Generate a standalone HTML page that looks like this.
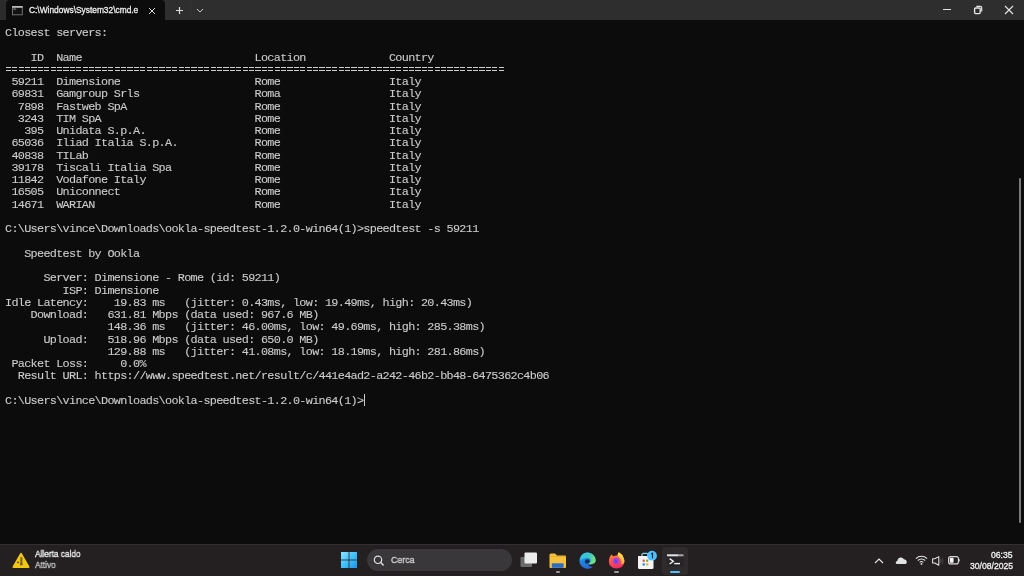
<!DOCTYPE html>
<html><head><meta charset="utf-8">
<style>
*{margin:0;padding:0;box-sizing:border-box}
html,body{width:1024px;height:576px;overflow:hidden;background:#0c0c0c}
#title{position:absolute;left:0;top:0;width:1024px;height:20.7px;background:#2e2e2e;border-bottom:1px solid #353535}
#lstrip{position:absolute;left:0;top:0;width:6px;height:20px;background:#2b2b2b}
#tab{position:absolute;left:6px;top:0px;width:159px;height:21px;background:#0c0c0c;border-radius:4px 4px 0 0}
#ticon{position:absolute;left:5.5px;top:6px}
#ttext{position:absolute;left:23px;top:4px;width:116px;-webkit-text-stroke:0.3px #f0f0f0;will-change:transform;overflow:hidden;font-family:"Liberation Sans",sans-serif;font-size:9.3px;color:#f0f0f0;white-space:nowrap;line-height:12px;}
#ttext span{display:inline-block;transform:scaleX(0.9);transform-origin:0 0}
#tclose{position:absolute;left:142px;top:7px}
#tplus{position:absolute;left:175px;top:6px}
#tsep{position:absolute;left:190px;top:2px;width:1px;height:15px;background:#333333}
#tdown{position:absolute;left:196px;top:8px}
#wmin{position:absolute;left:943px;top:9px;width:8px;height:1px;background:#e0e0e0}
#wres{position:absolute;left:972.5px;top:5px}
#wclose{position:absolute;left:1004px;top:5px}
#term{position:absolute;left:0;top:20px;width:1024px;height:524px;background:#0c0c0c}
.ln{position:absolute;left:5px;white-space:pre;font-family:"Liberation Mono",monospace;font-size:11.8px;letter-spacing:-0.68px;color:#cccccc;-webkit-text-stroke:0.1px #cccccc;will-change:transform;line-height:12px;height:12px}
#cursor{position:absolute;left:363.5px;top:394px;width:1px;height:12px;background:#cccccc}
.eq{position:absolute;left:5px;width:499.2px;height:1.4px;background:repeating-linear-gradient(to right,transparent 0 0.8px,#cfcfcf 0.8px 5.9px,transparent 5.9px 6.4px)}
#scroll{position:absolute;left:1019px;top:177.5px;width:2.4px;height:345.5px;background:#7a7a7a;border-radius:1.2px}
.tb{position:absolute;font-family:"Liberation Sans",sans-serif;font-size:9px;line-height:11px;white-space:nowrap;-webkit-text-stroke:0.3px currentColor;will-change:transform}
.sx{transform:scaleX(0.92);transform-origin:0 0}
#search{position:absolute;left:366.5px;top:4px;width:145px;height:22px;border-radius:11px;background:#393739}
.ind{position:absolute;top:26.5px;height:2px;border-radius:1px}
#active{position:absolute;left:662.2px;top:2.5px;width:26px;height:28px;border-radius:4px;background:#2f2b2d}
#taskbar{position:absolute;left:0;top:543.5px;width:1024px;height:32.5px;background:#242022;border-top:1px solid #343032}
</style></head><body>
<div id="title">
<div id="lstrip"></div>
<div id="tab">
<svg id="ticon" width="11" height="10" viewBox="0 0 11 10"><rect x="0.5" y="0.6" width="9.8" height="8.2" fill="#111" stroke="#7a7a7a" stroke-width="0.9"/><rect x="0.2" y="0.2" width="10.4" height="1.5" fill="#d0d0d0"/><rect x="1.2" y="2.2" width="3" height="2" fill="#555"/></svg>
<div id="ttext"><span>C:\Windows\System32\cmd.e</span></div>
<svg id="tclose" width="8" height="8" viewBox="0 0 8 8"><path d="M1 1L7 7M7 1L1 7" stroke="#d8d8d8" stroke-width="1"/></svg>
</div>
<svg id="tplus" width="9" height="9" viewBox="0 0 9 9"><path d="M4.5 1V8M1 4.5H8" stroke="#dcdcdc" stroke-width="1.2"/></svg>
<div id="tsep"></div>
<svg id="tdown" width="8" height="5" viewBox="0 0 8 5"><path d="M1 1L4 4L7 1" stroke="#cfcfcf" stroke-width="1" fill="none"/></svg>
<div id="wmin"></div>
<svg id="wres" width="10" height="10" viewBox="0 0 10 10"><rect x="1.6" y="3" width="5.6" height="5.6" rx="1" fill="none" stroke="#e4e4e4" stroke-width="1.4"/><path d="M3.3 1.4H7.4A1.3 1.3 0 0 1 8.7 2.7V6.6" fill="none" stroke="#e4e4e4" stroke-width="1.2"/></svg>
<svg id="wclose" width="10" height="10" viewBox="0 0 10 10"><path d="M1 1L9 9M9 1L1 9" stroke="#e6e6e6" stroke-width="1.1"/></svg>
</div>
<div id="term"></div>
<div id="lines">
<div class="ln" style="top:27.00px">Closest servers:</div>
<div class="ln" style="top:51.53px">    ID  Name                           Location             Country</div>
<div class="eq" style="top:66.80px"></div><div class="eq" style="top:69.80px"></div>
<div class="ln" style="top:76.07px"> 59211  Dimensione                     Rome                 Italy</div>
<div class="ln" style="top:88.33px"> 69831  Gamgroup Srls                  Roma                 Italy</div>
<div class="ln" style="top:100.60px">  7898  Fastweb SpA                    Rome                 Italy</div>
<div class="ln" style="top:112.87px">  3243  TIM SpA                        Rome                 Italy</div>
<div class="ln" style="top:125.13px">   395  Unidata S.p.A.                 Rome                 Italy</div>
<div class="ln" style="top:137.40px"> 65036  Iliad Italia S.p.A.            Rome                 Italy</div>
<div class="ln" style="top:149.67px"> 40838  TILab                          Rome                 Italy</div>
<div class="ln" style="top:161.93px"> 39178  Tiscali Italia Spa             Rome                 Italy</div>
<div class="ln" style="top:174.20px"> 11842  Vodafone Italy                 Rome                 Italy</div>
<div class="ln" style="top:186.47px"> 16505  Uniconnect                     Rome                 Italy</div>
<div class="ln" style="top:198.73px"> 14671  WARIAN                         Rome                 Italy</div>
<div class="ln" style="top:223.27px">C:\Users\vince\Downloads\ookla-speedtest-1.2.0-win64(1)&gt;speedtest -s 59211</div>
<div class="ln" style="top:247.80px">   Speedtest by Ookla</div>
<div class="ln" style="top:272.33px">      Server: Dimensione - Rome (id: 59211)</div>
<div class="ln" style="top:284.60px">         ISP: Dimensione</div>
<div class="ln" style="top:296.87px">Idle Latency:    19.83 ms   (jitter: 0.43ms, low: 19.49ms, high: 20.43ms)</div>
<div class="ln" style="top:309.13px">    Download:   631.81 Mbps (data used: 967.6 MB)</div>
<div class="ln" style="top:321.40px">                148.36 ms   (jitter: 46.00ms, low: 49.69ms, high: 285.38ms)</div>
<div class="ln" style="top:333.67px">      Upload:   518.96 Mbps (data used: 650.0 MB)</div>
<div class="ln" style="top:345.93px">                129.88 ms   (jitter: 41.08ms, low: 18.19ms, high: 281.86ms)</div>
<div class="ln" style="top:358.20px"> Packet Loss:     0.0%</div>
<div class="ln" style="top:370.47px">  Result URL: https://www.speedtest.net/result/c/441e4ad2-a242-46b2-bb48-6475362c4b06</div>
<div class="ln" style="top:395.00px">C:\Users\vince\Downloads\ookla-speedtest-1.2.0-win64(1)&gt;</div>
</div><!--e-->
<div id="scroll"></div>
<div id="cursor"></div>
<div id="taskbar">
<svg id="warn" width="18" height="17" viewBox="0 0 18 17" style="position:absolute;left:12px;top:7.7px">
<path d="M9 1.6 L16.6 15 L1.4 15 Z" fill="#f3c614" stroke="#f3c614" stroke-width="1.8" stroke-linejoin="round"/>
<rect x="8.3" y="5" width="2.1" height="6.2" rx="1" fill="#7a6412"/><circle cx="9.35" cy="12" r="1.6" fill="#7a6412"/><circle cx="6" cy="10.3" r="0.9" fill="#3a300a"/>
</svg>
<div class="tb sx" style="left:34.7px;top:4.3px;color:#f2f2f2">Allerta caldo</div>
<div class="tb sx" style="left:34.7px;top:15px;color:#c9c9c9">Attivo</div>
<svg width="17" height="17" viewBox="0 0 17 17" style="position:absolute;left:341px;top:7px">
<defs><linearGradient id="wg" gradientUnits="userSpaceOnUse" x1="0" y1="0" x2="16" y2="16"><stop offset="0" stop-color="#8ae6ff"/><stop offset="0.5" stop-color="#3fc0fa"/><stop offset="1" stop-color="#1b95ea"/></linearGradient></defs>
<rect x="0" y="0" width="7.6" height="7.6" fill="url(#wg)"/><rect x="8.4" y="0" width="7.6" height="7.6" fill="url(#wg)"/><rect x="0" y="8.4" width="7.6" height="7.6" fill="url(#wg)"/><rect x="8.4" y="8.4" width="7.6" height="7.6" fill="url(#wg)"/>
</svg>
<div id="search"></div>
<svg width="12" height="12" viewBox="0 0 12 12" style="position:absolute;left:373px;top:10.5px"><circle cx="5" cy="4.8" r="3.7" fill="none" stroke="#e0e0e0" stroke-width="1.2"/><path d="M7.7 7.5L10.2 10" stroke="#e0e0e0" stroke-width="1.4" stroke-linecap="round"/></svg>
<div class="tb sx" style="left:390.5px;top:9.8px;font-size:9.6px;color:#d6d6d6">Cerca</div>
<svg width="18" height="16" viewBox="0 0 18 16" style="position:absolute;left:520px;top:7px"><rect x="0.5" y="5" width="11.5" height="10" rx="1" fill="#6a6a6a"/><rect x="4.5" y="0.5" width="12.5" height="11" rx="1" fill="#ececec"/></svg>
<svg width="18" height="16" viewBox="0 0 18 16" style="position:absolute;left:549px;top:8px"><path d="M0.5 2 Q0.5 0.5 2 0.5 H6 L8 2.5 H16 Q17 2.5 17 3.5 V14 Q17 15 16 15 H1.5 Q0.5 15 0.5 14 Z" fill="#f6c23c"/><path d="M0.5 3.5 H17" stroke="#e0a820" stroke-width="0.8"/><rect x="2.8" y="10.3" width="11.8" height="4.5" fill="#2a6dc4"/></svg>
<div class="ind" style="left:556px;width:4px;background:#9a9a9a"></div>
<svg width="17" height="17" viewBox="0 0 17 17" style="position:absolute;left:579px;top:7.3px">
<defs><linearGradient id="eg" x1="0.2" y1="0" x2="0.5" y2="1"><stop offset="0" stop-color="#30b8f0"/><stop offset="0.55" stop-color="#1f7fe0"/><stop offset="1" stop-color="#2a6ad0"/></linearGradient><linearGradient id="eg2" x1="0" y1="0" x2="1" y2="0.5"><stop offset="0" stop-color="#2ec6ee"/><stop offset="0.55" stop-color="#3cc8c8"/><stop offset="1" stop-color="#74e27a"/></linearGradient></defs>
<path d="M16.6 9.6 A8.1 8.1 0 1 0 13.6 15 Q10 14.5 8.8 12.5 Q11.5 13 13.5 12.2 Q16.3 11.3 16.6 9.6Z" fill="url(#eg)"/>
<path d="M8.5 0.4 A8.1 8.1 0 0 1 16.6 9.2 Q16.3 11.5 13.2 12 Q10.5 12.4 9 11.8 Q12.2 10.5 11.8 8 Q11 5.5 7.5 5.8 Q4 6.2 1.0 8.2 Q2 0.6 8.5 0.4Z" fill="url(#eg2)"/>
<ellipse cx="8.3" cy="9.4" rx="2.4" ry="2.2" fill="#0b2d5c"/>
</svg>
<svg width="17" height="17" viewBox="0 0 17 17" style="position:absolute;left:608px;top:7.5px">
<defs><linearGradient id="fg" x1="0.3" y1="0" x2="0.5" y2="1"><stop offset="0" stop-color="#ff9a30"/><stop offset="0.45" stop-color="#ff5a45"/><stop offset="1" stop-color="#f0286a"/></linearGradient>
<linearGradient id="fy" x1="0" y1="0" x2="0.3" y2="1"><stop offset="0" stop-color="#ffe64a"/><stop offset="1" stop-color="#ffb43a"/></linearGradient>
<radialGradient id="fp" cx="0.5" cy="0.6" r="0.5"><stop offset="0" stop-color="#6a3ae8"/><stop offset="1" stop-color="#b04ad8"/></radialGradient></defs>
<path d="M3.2 2.5 Q4.6 3.8 5.6 4.3 Q7.5 3.2 9.5 3.6 Q9.8 1.5 10.8 0.3 Q14.6 2.2 15.9 6.5 Q16.6 8.5 16.2 10.5 Q15.2 16.4 8.4 16.5 Q1.6 16.2 0.8 9.8 Q0.6 6 3.2 2.5Z" fill="url(#fg)"/>
<path d="M10.8 0.3 Q14.6 2.2 15.9 6.5 Q16.6 8.5 16.2 10.5 Q15.3 12.5 13.3 12.3 Q14.2 9 12.2 6.6 Q10.2 4.3 9.5 3.6 Q9.8 1.5 10.8 0.3Z" fill="url(#fy)"/>
<ellipse cx="8.0" cy="8.8" rx="3.3" ry="3.4" fill="url(#fp)"/>
</svg>
<div class="ind" style="left:614px;width:4.5px;background:#9a9a9a"></div>
<svg width="22" height="24" viewBox="0 0 22 24" style="position:absolute;left:637px;top:2px">
<path d="M5 9 V7.5 Q5 6.3 6.5 6.3 H9.5 Q11 6.3 11 7.5 V9" fill="none" stroke="#7fd0e8" stroke-width="1.3"/>
<path d="M1 9 H16.5 V20.5 Q16.5 22 15 22 H2.5 Q1 22 1 20.5 Z" fill="#f4f4f6"/>
<rect x="5.6" y="12.6" width="2.2" height="2.2" fill="#e2553a"/><rect x="9.1" y="12.6" width="2.2" height="2.2" fill="#7aa82a"/><rect x="5.6" y="16.3" width="2.2" height="2.2" fill="#1a8ac8"/><rect x="9.1" y="16.3" width="2.2" height="2.2" fill="#e8b22a"/>
<circle cx="15" cy="8.7" r="4.9" fill="#4cc2ff"/><path d="M14.2 6.9 L15.5 6.2 V11.2" stroke="#0b2a3f" stroke-width="1.2" fill="none"/>
</svg>
<div id="active"></div>
<svg width="17" height="13" viewBox="0 0 17 13" style="position:absolute;left:666.5px;top:9.5px">
<rect x="0" y="0" width="16.5" height="12.5" rx="1" fill="#272527"/><rect x="0" y="0.3" width="11" height="2" fill="#e4e4e4"/><rect x="11" y="0.3" width="5.5" height="2" fill="#a8a8a8"/>
<path d="M2.6 4.6 L6.3 7.3 L2.6 10" stroke="#f2f2f2" stroke-width="1.4" fill="none"/><path d="M7.2 9.6 H13" stroke="#f2f2f2" stroke-width="1.4"/>
</svg>
<div class="ind" style="left:670px;width:10.3px;background:#4cc2ff"></div>
<svg width="10" height="6" viewBox="0 0 10 6" style="position:absolute;left:874px;top:13px"><path d="M1 5 L5 1 L9 5" fill="none" stroke="#e8e8e8" stroke-width="1.1"/></svg>
<svg width="13" height="9" viewBox="0 0 13 9" style="position:absolute;left:894.5px;top:11.2px"><path d="M2.2 8 Q0.6 8 0.7 6.4 Q0.8 5 2.3 4.9 Q2.8 1.6 5.8 1.4 Q8 1.3 8.9 3.3 Q11.6 3.2 11.8 5.8 Q12 8 10.2 8Z" fill="#e2e2e2"/></svg>
<svg width="13" height="10" viewBox="0 0 13 10" style="position:absolute;left:915.3px;top:10.6px"><path d="M0.9 3.6 A8 8 0 0 1 12.1 3.6" fill="none" stroke="#e6e6e6" stroke-width="1.05"/><path d="M2.8 5.5 A5.3 5.3 0 0 1 10.2 5.5" fill="none" stroke="#e6e6e6" stroke-width="1.05"/><path d="M4.7 7.3 A2.6 2.6 0 0 1 8.3 7.3" fill="none" stroke="#e6e6e6" stroke-width="1.05"/><circle cx="6.5" cy="8.9" r="0.95" fill="#e6e6e6"/></svg>
<svg width="13" height="10" viewBox="0 0 13 10" style="position:absolute;left:931.5px;top:11px"><path d="M0.6 2.8 H2.8 L6.8 0.6 V9.2 L2.8 7 H0.6 Z" fill="none" stroke="#e2e2e2" stroke-width="1.05" stroke-linejoin="round"/><path d="M8.6 3 Q9.6 4.9 8.6 6.8" fill="none" stroke="#5a5a5a" stroke-width="0.9"/><path d="M10.2 1.4 Q12 4.9 10.2 8.4" fill="none" stroke="#3f3f3f" stroke-width="0.9"/></svg>
<svg width="12" height="9" viewBox="0 0 12 9" style="position:absolute;left:947.5px;top:11.5px"><rect x="0.6" y="0.6" width="9.8" height="7.3" rx="2" fill="none" stroke="#d8d8d8" stroke-width="1.1"/><rect x="1.8" y="1.8" width="3.8" height="4.9" rx="0.8" fill="#f4f4f4"/><path d="M10.8 2.8 Q11.8 4.25 10.8 5.7Z" fill="#e0e0e0" stroke="#e0e0e0" stroke-width="0.8"/></svg>
<div class="tb" id="clk1" style="left:991px;top:5px;font-size:8.6px;color:#f0f0f0">06:35</div>
<div class="tb" id="clk2" style="left:970px;top:16px;font-size:8.6px;color:#f0f0f0">30/08/2025</div>
</div>
<script></script>
</body></html>
